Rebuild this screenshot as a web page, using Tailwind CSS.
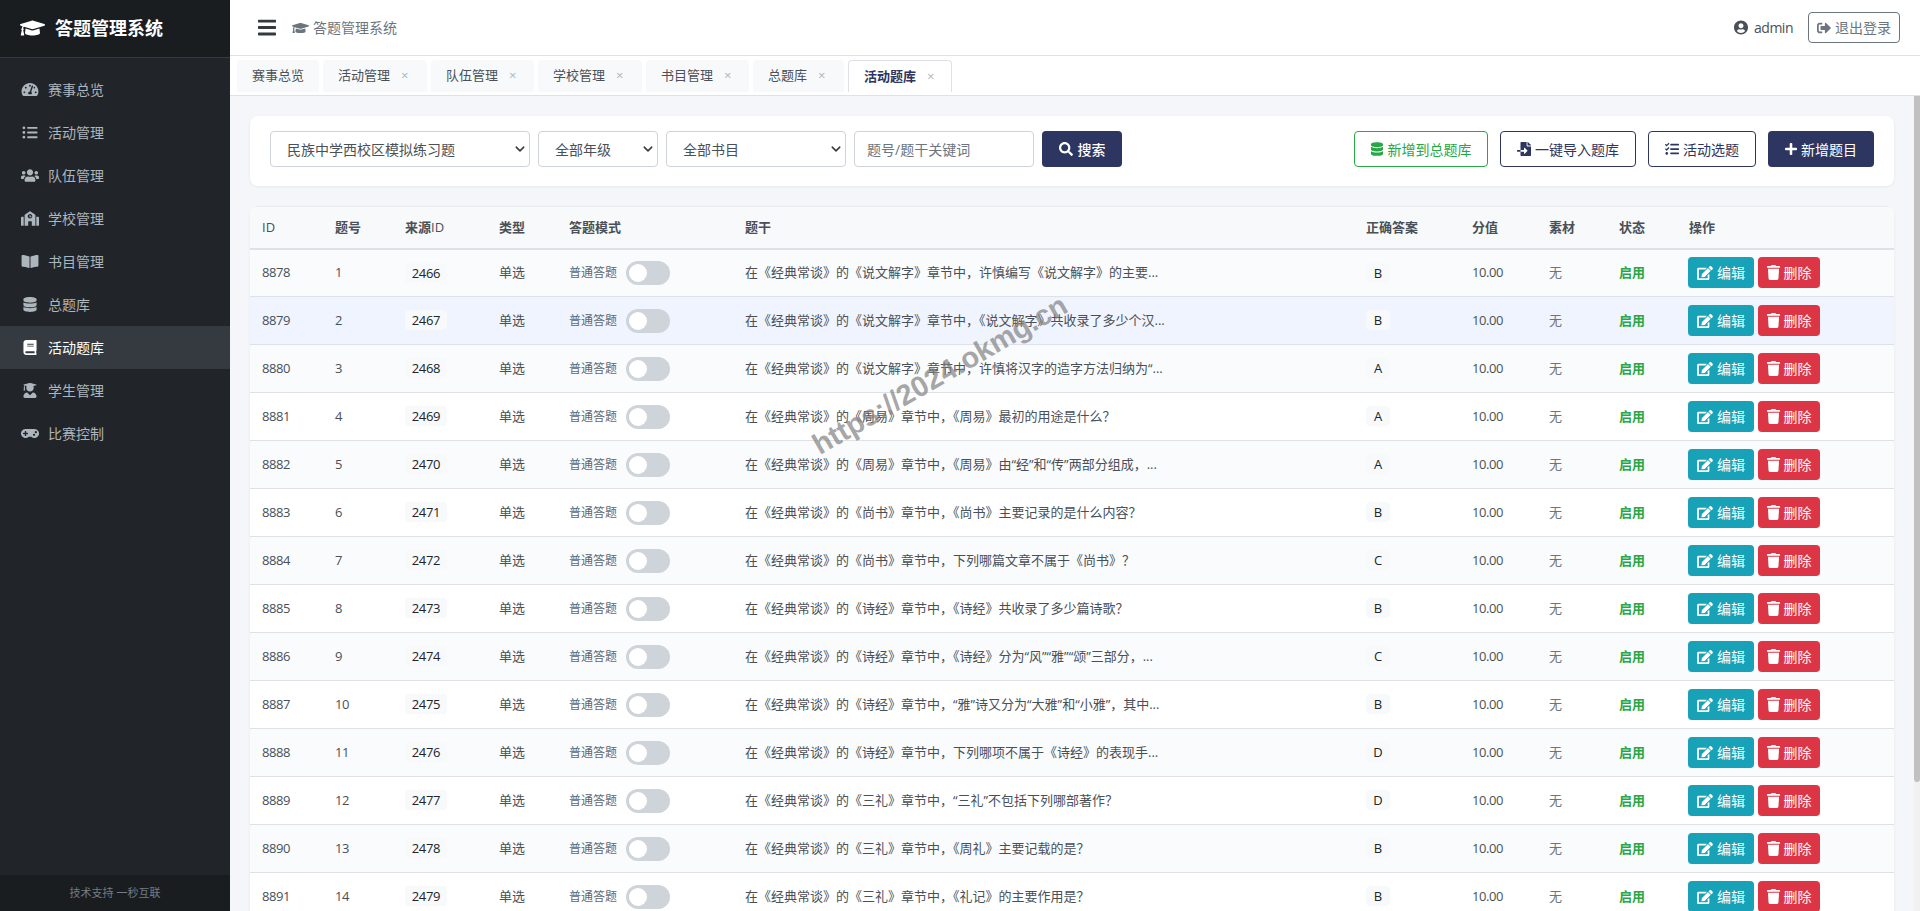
<!DOCTYPE html>
<html lang="zh-CN">
<head>
  <meta charset="UTF-8">
  <title>答题管理系统</title>
  <script src="https://cdn.jsdelivr.net/npm/@tailwindcss/browser@4"></script>
</head>
<body class="h-[911px] overflow-hidden flex font-['Open_Sans','Noto_Sans_CJK_SC',sans-serif] text-[13px] text-[#495057]">
  <svg class="hidden">
    <symbol id="i-cap" viewBox="0 0 640 512"><path d="M622.34 153.2L343.4 67.5c-15.2-4.67-31.6-4.67-46.79 0L17.66 153.2c-23.54 7.23-23.54 38.36 0 45.59l48.63 14.94c-10.67 13.19-17.23 29.28-17.88 46.9C38.78 266.15 32 276.11 32 288c0 10.78 5.68 19.85 13.86 25.65L20.33 428.53C18.11 438.52 25.71 448 35.94 448h56.11c10.24 0 17.84-9.48 15.62-19.47L82.14 313.65C90.32 307.85 96 298.78 96 288c0-11.57-6.47-21.25-15.66-26.87.76-15.02 8.44-28.3 20.69-36.72L296.6 284.5c9.06 2.78 26.44 6.25 46.79 0l278.95-85.7c23.55-7.24 23.55-38.36 0-45.6zM352.79 315.09c-28.53 8.76-52.84 3.92-65.59 0l-145.02-44.55L128 384c0 35.35 85.96 64 192 64s192-28.65 192-64l-14.18-113.47-145.03 44.56z"/></symbol>
    <symbol id="i-gauge" viewBox="0 0 576 512"><path d="M288 32C128.94 32 0 160.94 0 320c0 52.8 14.25 102.26 39.06 144.8 5.61 9.62 16.3 15.2 27.44 15.2h443c11.14 0 21.83-5.58 27.44-15.2C561.75 422.26 576 372.8 576 320c0-159.06-128.94-288-288-288zm0 64c14.71 0 26.58 10.13 30.32 23.65-1.11 2.26-2.64 4.23-3.45 6.67l-9.22 27.67c-5.13 3.49-10.97 6.01-17.64 6.01-17.67 0-32-14.33-32-32S270.33 96 288 96zM96 384c-17.67 0-32-14.33-32-32s14.33-32 32-32 32 14.33 32 32-14.33 32-32 32zm48-160c-17.67 0-32-14.33-32-32s14.33-32 32-32 32 14.33 32 32-14.33 32-32 32zm246.77-72.41l-61.33 184C343.13 347.33 352 364.54 352 384c0 11.72-3.38 22.55-8.88 32H232.88c-5.5-9.45-8.88-20.28-8.88-32 0-33.94 26.5-61.43 59.9-63.59l61.34-184.01c4.17-12.56 17.73-19.45 30.36-15.17 12.57 4.19 19.35 17.79 15.17 30.36zm14.66 57.2l15.52-46.55c3.47-1.29 7.13-2.23 11.05-2.23 17.67 0 32 14.33 32 32s-14.33 32-32 32c-11.38-.01-20.89-6.28-26.57-15.22zM480 384c-17.67 0-32-14.33-32-32s14.33-32 32-32 32 14.33 32 32-14.33 32-32 32z"/></symbol>
    <symbol id="i-list" viewBox="0 0 512 512"><path d="M48 48a48 48 0 1 0 48 48 48 48 0 0 0-48-48zm0 160a48 48 0 1 0 48 48 48 48 0 0 0-48-48zm0 160a48 48 0 1 0 48 48 48 48 0 0 0-48-48zm448 16H176a16 16 0 0 0-16 16v32a16 16 0 0 0 16 16h320a16 16 0 0 0 16-16v-32a16 16 0 0 0-16-16zm0-320H176a16 16 0 0 0-16 16v32a16 16 0 0 0 16 16h320a16 16 0 0 0 16-16V80a16 16 0 0 0-16-16zm0 160H176a16 16 0 0 0-16 16v32a16 16 0 0 0 16 16h320a16 16 0 0 0 16-16v-32a16 16 0 0 0-16-16z"/></symbol>
    <symbol id="i-users" viewBox="0 0 640 512"><path d="M96 224c35.3 0 64-28.7 64-64s-28.7-64-64-64-64 28.7-64 64 28.7 64 64 64zm448 0c35.3 0 64-28.7 64-64s-28.7-64-64-64-64 28.7-64 64 28.7 64 64 64zm32 32h-64c-17.6 0-33.5 7.1-45.1 18.6 40.3 22.1 68.9 62 75.1 109.4h66c17.7 0 32-14.3 32-32v-32c0-35.3-28.7-64-64-64zm-256 0c61.9 0 112-50.1 112-112S381.9 32 320 32 208 82.1 208 144s50.1 112 112 112zm76.8 32h-8.3c-20.8 10-43.9 16-68.5 16s-47.6-6-68.5-16h-8.3C179.6 288 128 339.6 128 403.2V432c0 26.5 21.5 48 48 48h288c26.5 0 48-21.5 48-48v-28.8c0-63.6-51.6-115.2-115.2-115.2zm-223.7-13.4C161.5 263.1 145.6 256 128 256H64c-35.3 0-64 28.7-64 64v32c0 17.7 14.3 32 32 32h65.9c6.3-47.4 34.9-87.3 75.2-109.4z"/></symbol>
    <symbol id="i-school" viewBox="0 0 640 512"><path d="M0 224v272c0 8.84 7.16 16 16 16h80V192H32c-17.67 0-32 14.33-32 32zm360-48h-24v-40c0-4.42-3.58-8-8-8h-16c-4.42 0-8 3.58-8 8v64c0 4.42 3.58 8 8 8h48c4.42 0 8-3.58 8-8v-16c0-4.42-3.58-8-8-8zm137.75-63.96l-160-106.67a32.02 32.02 0 0 0-35.5 0l-160 106.67A32.002 32.002 0 0 0 128 138.66V512h128V368c0-8.84 7.16-16 16-16h96c8.84 0 16 7.16 16 16v144h128V138.67c0-10.7-5.35-20.7-14.25-26.63zM320 256c-44.18 0-80-35.82-80-80s35.82-80 80-80 80 35.82 80 80-35.82 80-80 80zm288-64h-64v320h80c8.84 0 16-7.16 16-16V224c0-17.67-14.33-32-32-32z"/></symbol>
    <symbol id="i-bookopen" viewBox="0 0 576 512"><path d="M542.22 32.05c-54.8 3.11-163.72 14.43-230.96 55.59-4.64 2.84-7.27 7.89-7.27 13.17v363.87c0 11.55 12.63 18.85 23.28 13.49 69.18-34.82 169.23-44.32 218.7-46.92 16.89-.89 30.02-14.43 30.02-30.66V62.75c.01-17.71-15.35-31.74-33.77-30.7zM264.73 87.64C197.5 46.48 88.58 35.17 33.78 32.05 15.36 31.01 0 45.04 0 62.75V400.6c0 16.24 13.13 29.78 30.02 30.66 49.49 2.6 149.59 12.11 218.77 46.95 10.62 5.35 23.21-1.94 23.21-13.46V100.63c0-5.29-2.62-10.14-7.27-12.99z"/></symbol>
    <symbol id="i-db" viewBox="0 0 448 512"><path d="M448 73.143v45.714C448 159.143 347.667 192 224 192S0 159.143 0 118.857V73.143C0 32.857 100.333 0 224 0s224 32.857 224 73.143zM448 176v102.857C448 319.143 347.667 352 224 352S0 319.143 0 278.857V176c48.125 33.143 136.208 48.572 224 48.572S399.874 209.143 448 176zm0 160v102.857C448 479.143 347.667 512 224 512S0 479.143 0 438.857V336c48.125 33.143 136.208 48.572 224 48.572S399.874 369.143 448 336z"/></symbol>
    <symbol id="i-book" viewBox="0 0 448 512"><path d="M448 360V24c0-13.3-10.7-24-24-24H96C43 0 0 43 0 96v320c0 53 43 96 96 96h328c13.3 0 24-10.7 24-24v-16c0-7.5-3.5-14.3-8.9-18.7-4.2-15.4-4.2-59.3 0-74.7 5.4-4.3 8.9-11.1 8.9-18.6zM128 134c0-3.3 2.7-6 6-6h212c3.3 0 6 2.7 6 6v20c0 3.3-2.7 6-6 6H134c-3.3 0-6-2.7-6-6v-20zm0 64c0-3.3 2.7-6 6-6h212c3.3 0 6 2.7 6 6v20c0 3.3-2.7 6-6 6H134c-3.3 0-6-2.7-6-6v-20zm253.4 250H96c-17.7 0-32-14.3-32-32 0-17.6 14.4-32 32-32h285.4c-1.9 17.1-1.9 46.9 0 64z"/></symbol>
    <symbol id="i-student" viewBox="0 0 448 512"><path d="M319.4 320.6L224 416l-95.4-95.4C57.1 323.7 0 382.2 0 454.4v9.6c0 26.5 21.5 48 48 48h352c26.5 0 48-21.5 48-48v-9.6c0-72.2-57.1-130.7-128.6-133.8zM13.6 79.8l6.4 1.5v58.4c-7 4.2-12 11.5-12 20.3 0 8.4 4.6 15.4 11.1 19.7L3.5 242c-1.7 6.9 2.1 14 7.6 14h41.8c5.5 0 9.3-7.1 7.6-14l-15.6-62.3C51.4 175.4 56 168.4 56 160c0-8.8-5-16.1-12-20.3V87.1l66 15.9c-8.6 17.2-14 36.4-14 57 0 70.7 57.3 128 128 128s128-57.3 128-128c0-20.6-5.3-39.8-14-57l96.3-23.2c18.2-4.4 18.2-27.1 0-31.5l-190.4-46c-13-3.1-26.7-3.1-39.7 0L13.6 48.2c-18.1 4.4-18.1 27.2 0 31.6z"/></symbol>
    <symbol id="i-game" viewBox="0 0 640 512"><path d="M480.07 96H160a160 160 0 1 0 114.24 272h91.52A160 160 0 1 0 480.07 96zM248 268a12 12 0 0 1-12 12h-52v52a12 12 0 0 1-12 12h-24a12 12 0 0 1-12-12v-52H84a12 12 0 0 1-12-12v-24a12 12 0 0 1 12-12h52v-52a12 12 0 0 1 12-12h24a12 12 0 0 1 12 12v52h52a12 12 0 0 1 12 12zm216 76a40 40 0 1 1 40-40 40 40 0 0 1-40 40zm64-96a40 40 0 1 1 40-40 40 40 0 0 1-40 40z"/></symbol>
    <symbol id="i-bars" viewBox="0 0 448 512"><path d="M16 132h416c8.837 0 16-7.163 16-16V76c0-8.837-7.163-16-16-16H16C7.163 60 0 67.163 0 76v40c0 8.837 7.163 16 16 16zm0 160h416c8.837 0 16-7.163 16-16v-40c0-8.837-7.163-16-16-16H16c-8.837 0-16 7.163-16 16v40c0 8.837 7.163 16 16 16zm0 160h416c8.837 0 16-7.163 16-16v-40c0-8.837-7.163-16-16-16H16c-8.837 0-16 7.163-16 16v40c0 8.837 7.163 16 16 16z"/></symbol>
    <symbol id="i-user" viewBox="0 0 496 512"><path d="M248 8C111 8 0 119 0 256s111 248 248 248 248-111 248-248S385 8 248 8zm0 96c48.6 0 88 39.4 88 88s-39.4 88-88 88-88-39.4-88-88 39.4-88 88-88zm0 344c-58.7 0-111.3-26.6-146.5-68.2 18.8-35.4 55.6-59.8 98.5-59.8 2.4 0 4.8.4 7.1 1.1 13 4.2 26.6 6.9 40.9 6.9 14.3 0 28-2.7 40.9-6.9 2.3-.7 4.7-1.1 7.1-1.1 42.9 0 79.7 24.4 98.5 59.8C359.3 421.4 306.7 448 248 448z"/></symbol>
    <symbol id="i-out" viewBox="0 0 512 512"><path d="M497 273L329 441c-15 15-41 4.5-41-17v-96H152c-13.3 0-24-10.7-24-24v-96c0-13.3 10.7-24 24-24h136V88c0-21.4 25.9-32 41-17l168 168c9.3 9.4 9.3 24.6 0 34zM192 436v-40c0-6.6-5.4-12-12-12H96c-17.7 0-32-14.3-32-32V160c0-17.7 14.3-32 32-32h84c6.6 0 12-5.4 12-12V76c0-6.6-5.4-12-12-12H96c-53 0-96 43-96 96v192c0 53 43 96 96 96h84c6.6 0 12-5.4 12-12z"/></symbol>
    <symbol id="i-search" viewBox="0 0 512 512"><path d="M505 442.7L405.3 343c-4.5-4.5-10.6-7-17-7H372c27.6-35.3 44-79.7 44-128C416 93.1 322.9 0 208 0S0 93.1 0 208s93.1 208 208 208c48.3 0 92.7-16.4 128-44v16.3c0 6.4 2.5 12.5 7 17l99.7 99.7c9.4 9.4 24.6 9.4 33.9 0l28.3-28.3c9.4-9.4 9.4-24.6.1-34zM208 336c-70.7 0-128-57.2-128-128 0-70.7 57.2-128 128-128 70.7 0 128 57.2 128 128 0 70.7-57.2 128-128 128z"/></symbol>
    <symbol id="i-import" viewBox="0 0 512 512"><path d="M16 288c-8.8 0-16 7.2-16 16v32c0 8.8 7.2 16 16 16h112v-64zm489-183L407.1 7c-4.5-4.5-10.6-7-17-7H384v128h128v-6.1c0-6.3-2.5-12.4-7-16.9zm-153 31V0H152c-13.3 0-24 10.7-24 24v264h128v-65.2c0-14.3 17.3-21.4 27.4-11.3L379 308c6.6 6.7 6.6 17.4 0 24l-95.7 96.4c-10.1 10.1-27.4 3-27.4-11.3V352H128v136c0 13.3 10.7 24 24 24h336c13.3 0 24-10.7 24-24V160H376c-13.2 0-24-10.8-24-24z"/></symbol>
    <symbol id="i-tasks" viewBox="0 0 512 512"><path d="M139.61 35.5a12 12 0 0 0-17 0L58.93 98.81l-22.7-22.12a12 12 0 0 0-17 0L3.53 92.41a12 12 0 0 0 0 17l47.59 47.4a12.78 12.78 0 0 0 17.61 0l15.59-15.62L156.52 69a12.09 12.09 0 0 0 .09-17zm0 159.19a12 12 0 0 0-17 0l-63.68 63.72-22.7-22.1a12 12 0 0 0-17 0L3.53 252a12 12 0 0 0 0 17L51 316.5a12.77 12.77 0 0 0 17.6 0l15.7-15.69 72.2-72.22a12 12 0 0 0 .09-16.9zM64 368c-26.49 0-48.59 21.5-48.59 48S37.53 464 64 464a48 48 0 0 0 0-96zm432 16H208a16 16 0 0 0-16 16v32a16 16 0 0 0 16 16h288a16 16 0 0 0 16-16v-32a16 16 0 0 0-16-16zm0-320H208a16 16 0 0 0-16 16v32a16 16 0 0 0 16 16h288a16 16 0 0 0 16-16V80a16 16 0 0 0-16-16zm0 160H208a16 16 0 0 0-16 16v32a16 16 0 0 0 16 16h288a16 16 0 0 0 16-16v-32a16 16 0 0 0-16-16z"/></symbol>
    <symbol id="i-plus" viewBox="0 0 448 512"><path d="M416 208H272V64c0-17.67-14.33-32-32-32h-32c-17.67 0-32 14.33-32 32v144H32c-17.67 0-32 14.33-32 32v32c0 17.67 14.33 32 32 32h144v144c0 17.67 14.33 32 32 32h32c17.67 0 32-14.33 32-32V304h144c17.67 0 32-14.33 32-32v-32c0-17.67-14.33-32-32-32z"/></symbol>
    <symbol id="i-edit" viewBox="0 0 576 512"><path d="M402.6 83.2l90.2 90.2c3.8 3.8 3.8 10 0 13.8L274.4 405.6l-92.8 10.3c-12.4 1.4-22.9-9.1-21.5-21.5l10.3-92.8L388.8 83.2c3.8-3.8 10-3.8 13.8 0zm162-22.9l-48.8-48.8c-15.2-15.2-39.9-15.2-55.2 0l-35.4 35.4c-3.8 3.8-3.8 10 0 13.8l90.2 90.2c3.8 3.8 10 3.8 13.8 0l35.4-35.4c15.2-15.3 15.2-40 0-55.2zM384 346.2V448H64V128h229.8c3.2 0 6.2-1.3 8.5-3.5l40-40c7.6-7.6 2.2-20.5-8.5-20.5H48C21.5 64 0 85.5 0 112v352c0 26.5 21.5 48 48 48h352c26.5 0 48-21.5 48-48V306.2c0-10.7-12.9-16-20.5-8.5l-40 40c-2.2 2.3-3.5 5.3-3.5 8.5z"/></symbol>
    <symbol id="i-trash" viewBox="0 0 448 512"><path d="M432 32H312l-9.4-18.7A24 24 0 0 0 281.1 0H166.8a23.72 23.72 0 0 0-21.4 13.3L136 32H16A16 16 0 0 0 0 48v32a16 16 0 0 0 16 16h416a16 16 0 0 0 16-16V48a16 16 0 0 0-16-16zM53.2 467a48 48 0 0 0 47.9 45h245.8a48 48 0 0 0 47.9-45L416 128H32z"/></symbol>
    <symbol id="i-chev" viewBox="0 0 16 16"><path d="M2 5l6 6 6-6" fill="none" stroke="currentColor" stroke-width="2.4" stroke-linecap="round" stroke-linejoin="round"/></symbol>
  </svg>

  <!-- sidebar -->
  <aside class="w-[230px] shrink-0 h-full bg-[#212529] flex flex-col">
    <div class="h-[58px] shrink-0 bg-[#1a1d20] border-b border-[#343a40] flex items-center pl-5 pb-[1px] gap-[10px] text-white">
      <svg class="w-[25px] h-5 fill-current"><use href="#i-cap"/></svg>
      <span class="text-[18px] font-bold">答题管理系统</span>
    </div>
    <nav id="menu" class="flex-1 pt-[10px]"></nav>
    <div class="h-9 shrink-0 bg-[#1a1d20] flex items-center justify-center text-[11px] text-[#757c84]">技术支持 一秒互联</div>
  </aside>

  <div class="flex-1 min-w-0 flex flex-col">
    <!-- top bar -->
    <header class="h-14 shrink-0 bg-white border-b border-[#dee2e6] flex items-center pl-[28px] pr-5">
      <svg class="w-[18px] h-[21px] fill-[#343a40]"><use href="#i-bars"/></svg>
      <svg class="w-[17px] h-[14px] ml-4 fill-[#6c757d]"><use href="#i-cap"/></svg>
      <span class="ml-[4px] text-[14px] text-[#6c757d]">答题管理系统</span>
      <svg class="ml-auto w-[14px] h-[15px] fill-[#495057]"><use href="#i-user"/></svg>
      <span class="ml-[6px] text-[14px] tracking-[-0.5px] text-[#495057]">admin</span>
      <button class="ml-[15px] w-[92px] h-[31px] border border-[#6c757d] rounded-[4px] flex items-center justify-center gap-1 text-[14px] text-[#6c757d]">
        <svg class="w-[14px] h-[14px] fill-current"><use href="#i-out"/></svg>退出登录
      </button>
    </header>

    <!-- tabs -->
    <div id="tabs" class="h-10 shrink-0 bg-white border-b border-[#dee2e6] flex items-start gap-1 pl-[7px] pt-1"></div>

    <div class="flex-1 min-h-0 flex">
      <main class="flex-1 min-w-0 bg-[#f4f6f9] p-5 overflow-hidden">
        <div class="h-[70px] bg-white rounded-lg shadow-[0_1px_3px_rgba(0,0,0,0.06)] flex items-start pt-[15px] px-5 gap-2">
          <label class="relative w-[260px]">
            <select class="appearance-none w-full h-9 border border-[#ced4da] rounded-[4px] bg-white pl-4 text-[14px] text-[#495057]"><option>民族中学西校区模拟练习题</option></select>
            <svg class="absolute right-[5px] top-[13px] w-[10px] h-[10px] text-[#343a40] pointer-events-none"><use href="#i-chev"/></svg>
          </label>
          <label class="relative w-[120px]">
            <select class="appearance-none w-full h-9 border border-[#ced4da] rounded-[4px] bg-white pl-4 text-[14px] text-[#495057]"><option>全部年级</option></select>
            <svg class="absolute right-[5px] top-[13px] w-[10px] h-[10px] text-[#343a40] pointer-events-none"><use href="#i-chev"/></svg>
          </label>
          <label class="relative w-[180px]">
            <select class="appearance-none w-full h-9 border border-[#ced4da] rounded-[4px] bg-white pl-4 text-[14px] text-[#495057]"><option>全部书目</option></select>
            <svg class="absolute right-[5px] top-[13px] w-[10px] h-[10px] text-[#343a40] pointer-events-none"><use href="#i-chev"/></svg>
          </label>
          <input placeholder="题号/题干关键词" class="w-[180px] h-9 border border-[#ced4da] rounded-[4px] px-3 text-[14px] placeholder:text-[#6c757d]">
          <button class="w-[80px] h-9 rounded-[4px] bg-[#2d3561] text-white text-[14px] font-medium flex items-center justify-center gap-[5px]">
            <svg class="w-[14px] h-[14px] fill-current"><use href="#i-search"/></svg>搜索
          </button>
          <button class="ml-auto w-[134px] h-9 rounded-[4px] border border-[#28a745] text-[#28a745] text-[14px] flex items-center justify-center gap-[5px]">
            <svg class="w-3 h-[14px] fill-current"><use href="#i-db"/></svg>新增到总题库
          </button>
          <button class="ml-1 w-[136px] h-9 rounded-[4px] border border-[#2d3561] text-[#2d3561] text-[14px] flex items-center justify-center gap-[4px]">
            <svg class="w-[14px] h-[14px] fill-current"><use href="#i-import"/></svg>一键导入题库
          </button>
          <button class="ml-1 w-[108px] h-9 rounded-[4px] border border-[#2d3561] text-[#2d3561] text-[14px] flex items-center justify-center gap-[4px]">
            <svg class="w-[14px] h-[14px] fill-current"><use href="#i-tasks"/></svg>活动选题
          </button>
          <button class="ml-1 w-[106px] h-9 rounded-[4px] bg-[#2d3561] text-white text-[14px] flex items-center justify-center gap-[4px]">
            <svg class="w-3 h-[14px] fill-current"><use href="#i-plus"/></svg>新增题目
          </button>
        </div>

        <div class="mt-5 bg-white rounded-t-lg overflow-hidden shadow-[0_1px_3px_rgba(0,0,0,0.06)]">
          <table class="w-full table-fixed border-collapse">
            <colgroup>
              <col class="w-[73px]"><col class="w-[70px]"><col class="w-[94px]"><col class="w-[70px]"><col class="w-[176px]"><col class="w-[621px]"><col class="w-[106px]"><col class="w-[77px]"><col class="w-[70px]"><col class="w-[70px]"><col class="w-[217px]">
            </colgroup>
            <thead>
              <tr class="h-[42px] bg-[#f8f9fa] border-t border-b-2 border-t-[#e9ecef] border-b-[#dee2e6] text-left text-[#495057] font-semibold">
                <th class="px-3 font-medium">ID</th><th class="px-3">题号</th><th class="px-3">来源<span class="font-medium">ID</span></th><th class="px-3">类型</th><th class="px-3">答题模式</th><th class="px-3">题干</th><th class="px-3">正确答案</th><th class="px-3">分值</th><th class="px-3">素材</th><th class="px-3">状态</th><th class="px-3">操作</th>
              </tr>
            </thead>
            <tbody id="rows"></tbody>
          </table>
        </div>
      </main>
      <div class="w-[6px] shrink-0 bg-[#f1f1f1]">
        <div class="h-[686px] bg-[#c1c1c1] rounded-b-[3px]"></div>
      </div>
    </div>
  </div>

  <!-- watermark sits over the table -->
  <div class="absolute left-[940px] top-[375px] -translate-x-1/2 -translate-y-1/2 -rotate-[30deg] text-[29px] leading-none font-bold font-['Liberation_Sans',sans-serif] text-[#808080]/70 pointer-events-none whitespace-nowrap">https://2024.okmg.cn</div>

  <script>
    const menu = [
      ["i-gauge", "赛事总览"], ["i-list", "活动管理"], ["i-users", "队伍管理"], ["i-school", "学校管理"],
      ["i-bookopen", "书目管理"], ["i-db", "总题库"], ["i-book", "活动题库"], ["i-student", "学生管理"], ["i-game", "比赛控制"],
    ];
    document.getElementById("menu").innerHTML = menu.map(([icon, name]) => {
      const active = name === "活动题库";
      return `<a class="h-[43px] flex items-center text-[14px] ${active ? "bg-[#343a40] text-white" : "text-[#adb5bd]"}">
        <span class="w-[48px] flex justify-center pl-[12px]"><svg class="w-[18px] h-[15px] fill-current"><use href="#${icon}"/></svg></span>${name}</a>`;
    }).join("");

    const tabs = [["赛事总览", 82], ["活动管理", 104], ["队伍管理", 103], ["学校管理", 104], ["书目管理", 103], ["总题库", 91], ["活动题库", 104]];
    document.getElementById("tabs").innerHTML = tabs.map(([name, w], i) => {
      const active = name === "活动题库";
      return `<div style="width:${w}px" class="h-8 rounded-t-[4px] flex items-center pl-[15px] gap-[11px] ${active ? "bg-white border border-b-0 border-[#dee2e6] text-[#2d3561] font-semibold" : "bg-[#f8f9fa] text-[#495057]"}">${name}${i ? '<span class="text-[#adb5bd] font-normal text-[13px]">×</span>' : ""}</div>`;
    }).join("");

    const q = "在《经典常谈》的";
    const rows = [
      [8878, 2466, "B", q + "《说文解字》章节中，许慎编写《说文解字》的主要..."],
      [8879, 2467, "B", q + "《说文解字》章节中，《说文解字》共收录了多少个汉..."],
      [8880, 2468, "A", q + "《说文解字》章节中，许慎将汉字的造字方法归纳为“..."],
      [8881, 2469, "A", q + "《周易》章节中，《周易》最初的用途是什么？"],
      [8882, 2470, "A", q + "《周易》章节中，《周易》由“经”和“传”两部分组成，..."],
      [8883, 2471, "B", q + "《尚书》章节中，《尚书》主要记录的是什么内容？"],
      [8884, 2472, "C", q + "《尚书》章节中，下列哪篇文章不属于《尚书》？"],
      [8885, 2473, "B", q + "《诗经》章节中，《诗经》共收录了多少篇诗歌？"],
      [8886, 2474, "C", q + "《诗经》章节中，《诗经》分为“风”“雅”“颂”三部分，..."],
      [8887, 2475, "B", q + "《诗经》章节中，“雅”诗又分为“大雅”和“小雅”，其中..."],
      [8888, 2476, "D", q + "《诗经》章节中，下列哪项不属于《诗经》的表现手..."],
      [8889, 2477, "D", q + "《三礼》章节中，“三礼”不包括下列哪部著作？"],
      [8890, 2478, "B", q + "《三礼》章节中，《周礼》主要记载的是？"],
      [8891, 2479, "B", q + "《三礼》章节中，《礼记》的主要作用是？"],
    ];
    document.getElementById("rows").innerHTML = rows.map(([id, src, ans, text], i) => {
      const bg = i === 1 ? "bg-[#f0f4ff]" : i % 2 ? "bg-white" : "bg-[#fafbfd]";
      return `<tr class="h-[48px] border-b border-[#dee2e6] ${bg}">
        <td class="px-3 tracking-[-0.4px]">${id}</td>
        <td class="px-3 tracking-[-0.4px]">${i + 1}</td>
        <td class="px-3"><span class="inline-block w-[42px] h-5 leading-5 text-center rounded-[4px] bg-[#f8f9fa] text-[#212529] tracking-[-0.3px]">${src}</span></td>
        <td class="px-3">单选</td>
        <td class="px-3"><div class="flex items-center gap-[9px] text-[12px] text-[#5f6871]">普通答题<span class="w-[44px] h-6 rounded-full bg-[#ced4da] p-[3px]"><span class="block w-[18px] h-[18px] rounded-full bg-white"></span></span></div></td>
        <td class="px-3 whitespace-nowrap">${text}</td>
        <td class="px-3"><span class="inline-block w-6 h-5 leading-5 text-center rounded-[4px] bg-[#f8f9fa] text-[#212529]">${ans}</span></td>
        <td class="px-3 tracking-[-0.4px]">10.00</td>
        <td class="px-3 text-[#6c757d]">无</td>
        <td class="px-3 text-[#28a745] font-bold">启用</td>
        <td class="px-3"><div class="-ml-px flex gap-[4px] text-[14px] text-white">
          <button class="w-[66px] h-[31px] rounded-[4px] bg-[#17a2b8] flex items-center justify-center gap-[4px]"><svg class="w-[16px] h-[14px] fill-current"><use href="#i-edit"/></svg>编辑</button>
          <button class="w-[62px] h-[31px] rounded-[4px] bg-[#dc3545] flex items-center justify-center gap-[4px]"><svg class="w-[13px] h-[15px] fill-current"><use href="#i-trash"/></svg>删除</button>
        </div></td>
      </tr>`;
    }).join("");
  </script>
</body>
</html>
